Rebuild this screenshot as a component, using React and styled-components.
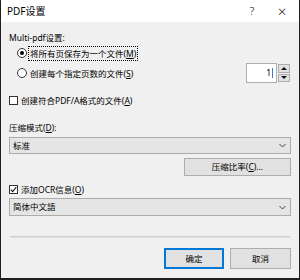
import styled, { createGlobalStyle } from 'styled-components';

const GlobalStyle = createGlobalStyle`
  html, body { margin: 0; padding: 0; background: #ffffff; }
  body { font-family: "Noto Sans", "Noto Sans CJK SC", sans-serif; }
`;

const Window = styled.div`
  width: 300px;
  height: 280px;
  box-sizing: border-box;
  display: flex;
  flex-direction: column;
  background: #f0f0f0;
  border-left: 1px solid #1e1e1e;
  border-right: 1px solid #1e1e1e;
  border-bottom: 2px solid #1e1e1e;
  color: #000;
  font-size: 8.5px;
`;

const TitleBar = styled.div`
  height: 22px;
  flex: none;
  display: flex;
  align-items: center;
  background: #ffffff;
  padding-left: 6px;
`;

const Title = styled.div`
  flex: 1;
  font-size: 10px;
  line-height: 22px;
`;

const TitleButton = styled.div`
  width: ${(p) => p.$w}px;
  text-align: center;
  font-size: ${(p) => p.$size}px;
  line-height: 22px;
  color: #222;
  font-weight: 300;
`;

const Body = styled.div`
  flex: 1;
  display: flex;
  flex-direction: column;
  padding: 9px 8px 0 8px;
`;

const TextLine = styled.div`
  height: ${(p) => p.$h || 16}px;
  line-height: ${(p) => p.$h || 16}px;
  margin-top: ${(p) => p.$top || 0}px;
  white-space: nowrap;
`;

const Row = styled.div`
  display: flex;
  align-items: center;
  height: ${(p) => p.$h || 16}px;
  margin-top: ${(p) => p.$top || 0}px;
  padding-left: ${(p) => p.$indent || 0}px;
  white-space: nowrap;
`;

const Radio = styled.span`
  width: 10px;
  height: 10px;
  box-sizing: border-box;
  border: 1px solid #333;
  border-radius: 50%;
  background: #fff;
  display: flex;
  align-items: center;
  justify-content: center;
  margin-right: 2px;
  &::after {
    content: '';
    width: 4px;
    height: 4px;
    border-radius: 50%;
    background: ${(p) => (p.$checked ? '#000' : 'transparent')};
  }
`;

const Label = styled.span`
  line-height: 13px;
  padding: 0 1px;
  outline: ${(p) => (p.$focus ? '1px dotted #000' : 'none')};
  outline-offset: 0;
`;

const Check = styled.span`
  width: 9px;
  height: 9px;
  box-sizing: border-box;
  border: 1px solid #333;
  background: #fff;
  margin-right: 2px;
  display: flex;
  align-items: center;
  justify-content: center;
`;

const Spinner = styled.div`
  margin-left: auto;
  display: flex;
  height: 20px;
  margin-right: 1px;
`;

const SpinInput = styled.div`
  width: 31px;
  box-sizing: border-box;
  border: 1px solid #abadb3;
  background: #fff;
  padding-right: 3px;
  line-height: 18px;
  display: flex;
  align-items: center;
  justify-content: flex-end;
  &::after {
    content: '';
    width: 1px;
    height: 10px;
    background: #3a7bd5;
    margin-left: 1px;
  }
`;

const SpinButtons = styled.div`
  width: 13px;
  display: flex;
  flex-direction: column;
  gap: 1px;
  padding: 1px 0 1px 1px;
  box-sizing: border-box;
`;

const SpinButton = styled.div`
  flex: 1;
  background: #e1e1e1;
  border: 1px solid #adadad;
  display: flex;
  align-items: center;
  justify-content: center;
  &::after {
    content: '';
    border-left: 3px solid transparent;
    border-right: 3px solid transparent;
    ${(p) => (p.$up ? 'border-bottom: 3px solid #111;' : 'border-top: 3px solid #111;')}
  }
`;

const Select = styled.div`
  height: ${(p) => p.$h}px;
  margin-top: ${(p) => p.$top}px;
  box-sizing: border-box;
  border: 1px solid #acacac;
  background: #e5e5e5;
  display: flex;
  align-items: center;
  padding: 0 4px 0 3px;
`;

const SelectText = styled.span`
  flex: 1;
  line-height: 14px;
`;

const Button = styled.div`
  width: ${(p) => p.$w}px;
  height: ${(p) => p.$h}px;
  margin-top: ${(p) => p.$top || 0}px;
  box-sizing: border-box;
  border: ${(p) => (p.$default ? '2px solid #0078d7' : '1px solid #adadad')};
  background: #e1e1e1;
  display: flex;
  align-items: center;
  justify-content: center;
  line-height: 14px;
  white-space: nowrap;
`;

const RightRow = styled.div`
  display: flex;
  justify-content: flex-end;
  gap: 6px;
  margin-top: ${(p) => p.$top || 0}px;
`;

const Separator = styled.div`
  height: 1px;
  margin: 20px 1px 0 1px;
  background: #cfcfcf;
  border-bottom: 1px solid #e0e0e0;
`;

const Chevron = () => (
  <svg width="7" height="5" viewBox="0 0 7 5">
    <path d="M0.5 1 L3.5 4 L6.5 1" fill="none" stroke="#444" strokeWidth="1" />
  </svg>
);

const Tick = () => (
  <svg width="7" height="7" viewBox="0 0 7 7">
    <path d="M0.8 3.6 L2.7 5.6 L6.3 1" fill="none" stroke="#111" strokeWidth="1.1" />
  </svg>
);

export default function App() {
  return (
    <>
      <GlobalStyle />
      <Window>
        <TitleBar>
          <Title>PDF设置</Title>
          <TitleButton $w={26} $size={11}>?</TitleButton>
          <TitleButton $w={34} $size={15}>×</TitleButton>
        </TitleBar>
        <Body>
          <TextLine $h={14}>Multi-pdf设置:</TextLine>
          <Row $indent={8}>
            <Radio $checked />
            <Label $focus>
              将所有页保存为一个文件(<u>M</u>)
            </Label>
          </Row>
          <Row $indent={8} $h={20} $top={2}>
            <Radio />
            <Label>
              创建每个指定页数的文件(<u>S</u>)
            </Label>
            <Spinner>
              <SpinInput>1</SpinInput>
              <SpinButtons>
                <SpinButton $up />
                <SpinButton />
              </SpinButtons>
            </Spinner>
          </Row>
          <Row $top={9}>
            <Check />
            <Label>
              创建符合PDF/A格式的文件(<u>A</u>)
            </Label>
          </Row>
          <TextLine $top={12}>
            压缩模式(<u>D</u>):
          </TextLine>
          <Select $h={17} $top={1}>
            <SelectText>标准</SelectText>
            <Chevron />
          </Select>
          <RightRow $top={4}>
            <Button $w={107} $h={18}>
              压缩比率(<u>C</u>)...
            </Button>
          </RightRow>
          <Row $top={5}>
            <Check>
              <Tick />
            </Check>
            <Label>
              添加OCR信息(<u>O</u>)
            </Label>
          </Row>
          <Select $h={18} $top={1}>
            <SelectText>简体中文語</SelectText>
            <Chevron />
          </Select>
          <Separator />
          <RightRow $top={10}>
            <Button $w={60} $h={21} $default>
              确定
            </Button>
            <Button $w={61} $h={21}>
              取消
            </Button>
          </RightRow>
        </Body>
      </Window>
    </>
  );
}
